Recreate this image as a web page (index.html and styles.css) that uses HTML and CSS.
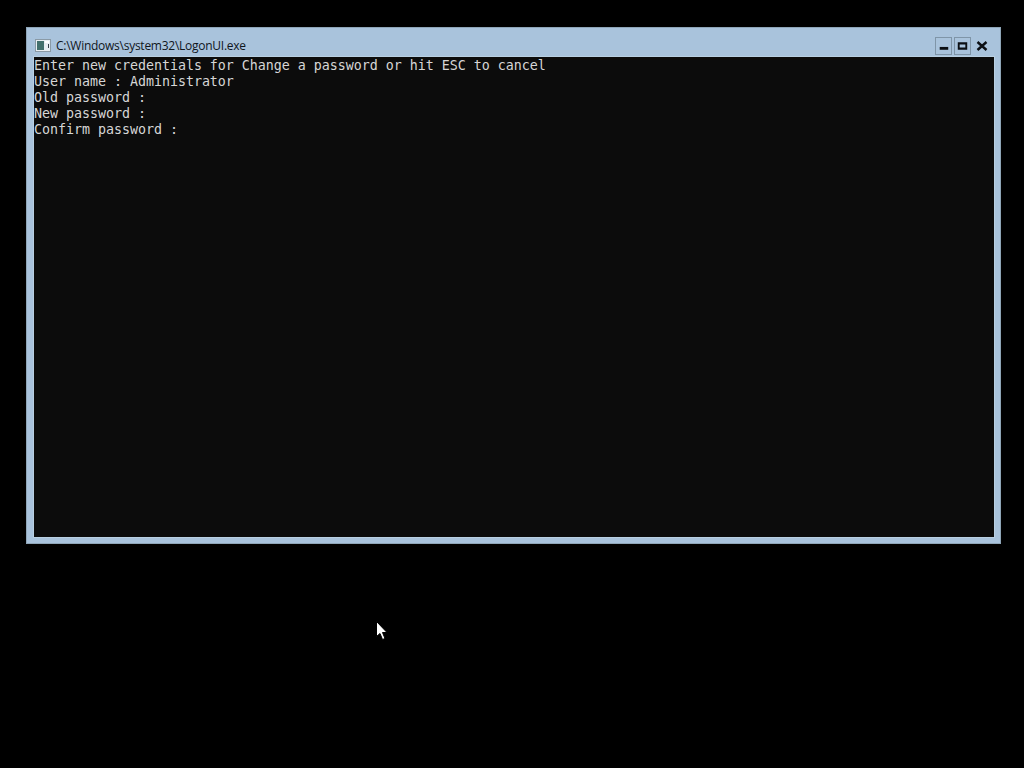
FILE: index.html
```html
<!DOCTYPE html>
<html lang="en">
<head>
<meta charset="utf-8">
<title>LogonUI</title>
<link rel="stylesheet" href="styles.css">
</head>
<body>
<div class="window">
  <div class="titlebar">
    <svg class="app-icon" width="16" height="14" viewBox="0 0 16 14">
      <rect x="0.5" y="0.5" width="15" height="12" fill="#e8eef2" stroke="#8a9aa6"/>
      <rect x="2" y="2" width="7" height="9" fill="#43706c"/>
      <rect x="10" y="2" width="4" height="2" fill="#fff"/>
      <rect x="13" y="5" width="1" height="4" fill="#39424a"/>
    </svg>
    <span class="title">C:\Windows\system32\LogonUI.exe</span>
    <div class="controls">
      <div class="control framed"><svg width="18" height="16" viewBox="0 0 18 16"><rect x="5" y="9" width="9" height="3" fill="#0b0f14"/></svg></div>
      <div class="control framed"><svg width="18" height="16" viewBox="0 0 18 16"><path d="M4 4h10v8H4z M6 6.500v3h6v-3z" fill="#0b0f14" fill-rule="evenodd"/></svg></div>
      <div class="control"><svg width="18" height="16" viewBox="0 0 18 16"><path d="M4.500 4l9 8M13.500 4l-9 8" stroke="#0b0f14" stroke-width="2.400" fill="none"/></svg></div>
    </div>
  </div>
  <pre class="console">Enter new credentials for Change a password or hit ESC to cancel
User name : Administrator
Old password :
New password :
Confirm password :</pre>
</div>
<svg class="cursor" width="12" height="21" viewBox="0 0 12 21">
  <path d="M0.500 0.500V15.500L4 12.500L6.500 18.500L9 17.500L6.500 11.500H11Z" fill="#fff" stroke="#000"/>
</svg>
</body>
</html>
```
FILE: styles.css
```css
html, body {
  margin: 0;
  height: 100%;
  background: #000;
  overflow: hidden;
}
body {
  padding: 27px 0 0 26px;
  box-sizing: border-box;
  position: relative;
}
.window {
  width: 975px;
  height: 517px;
  box-sizing: border-box;
  background: #a9c3dc;
  border: 1px solid #8fa6b8;
  padding: 0 6px 6px 7px;
  display: flex;
  flex-direction: column;
}
.titlebar {
  height: 29px;
  flex: none;
  display: flex;
  align-items: center;
  padding-top: 6px;
  box-sizing: border-box;
  color: #10161c;
}
.app-icon {
  flex: none;
  margin-left: 1px;
}
.title {
  margin-left: 5px;
  font: 12px "Open Sans", "Noto Sans", sans-serif;
  letter-spacing: -0.26px;
  white-space: nowrap;
}
.controls {
  margin-left: auto;
  display: flex;
  gap: 2px;
  margin-right: 3px;
}
.control {
  width: 18px;
  height: 18px;
  box-sizing: border-box;
  display: flex;
  align-items: center;
  justify-content: center;
}
.control.framed {
  width: 17px;
  outline: 1px solid #7f95a8;
  outline-offset: -1px;
}
.console {
  flex: 1;
  margin: 0;
  padding: 1px 0 0 0;
  background: #0c0c0c;
  color: #d6d6d6;
  font: 13.33px/16px "DejaVu Sans Mono", "Liberation Mono", monospace;
  letter-spacing: -0.03px;
  overflow: hidden;
  box-shadow: 0 0 0 1px #b9d0e2;
}
.cursor {
  position: absolute;
  left: 376px;
  top: 621px;
}
```
